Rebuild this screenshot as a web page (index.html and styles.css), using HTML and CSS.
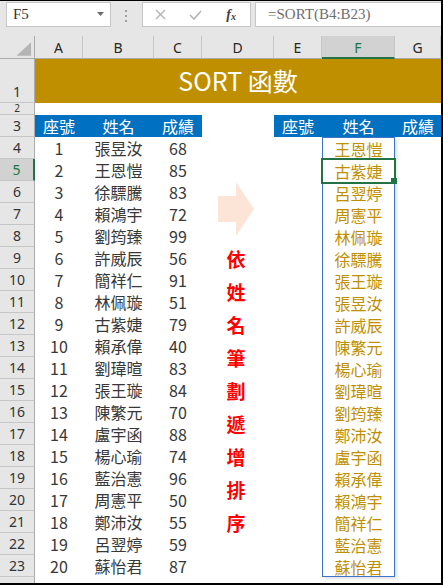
FILE: index.html
```html
<!DOCTYPE html>
<html lang="zh-Hant">
<head>
<meta charset="utf-8">
<title>SORT 函數</title>
<link rel="stylesheet" href="styles.css">
</head>
<body>
<div class="frame">
  <div class="fbar">
    <div class="namebox"><span>F5</span><svg class="drop" width="7" height="4" viewBox="0 0 7 4"><path d="M0 0H7L3.5 4Z" fill="#6b6b6b"/></svg></div>
    <svg class="dots" width="4" height="12" viewBox="0 0 4 12"><rect x="1" y="0" width="2" height="2" fill="#a0a0a0"/><rect x="1" y="5" width="2" height="2" fill="#a0a0a0"/><rect x="1" y="10" width="2" height="2" fill="#a0a0a0"/></svg>
    <div class="btns">
      <span class="btn"><svg width="11" height="11" viewBox="0 0 11 11"><path d="M1 1L10 10M10 1L1 10" stroke="#b3b3b3" stroke-width="1.4" fill="none"/></svg></span>
      <span class="btn"><svg width="13" height="10" viewBox="0 0 13 10"><path d="M1 5L5 9L12 1" stroke="#b3b3b3" stroke-width="1.6" fill="none"/></svg></span>
      <span class="btn fx">f<span class="x">x</span></span>
    </div>
    <div class="formula">=SORT(B4:B23)</div>
  </div>

  <div class="sheet">
    <div class="ch corner"><svg width="35" height="22" viewBox="0 0 35 22"><path d="M17 20H32V6Z" fill="#b4b4b4"/></svg></div>
    <div class="ch">A</div>
    <div class="ch">B</div>
    <div class="ch">C</div>
    <div class="ch">D</div>
    <div class="ch">E</div>
    <div class="ch csel">F</div>
    <div class="ch">G</div>

    <div class="dcol">
      <svg class="arrow" width="36" height="54" viewBox="0 0 36 54"><path d="M0 14H18V0L36 27L18 54V40H0Z" fill="#fce4d6"/></svg>
      <div class="vtext"><span>依</span><span>姓</span><span>名</span><span>筆</span><span>劃</span><span>遞</span><span>增</span><span>排</span><span>序</span></div>
    </div>

    <div class="spill">
      <div class="f">王恩愷</div>
      <div class="f sel">古紫婕</div>
      <div class="f">呂翌婷</div>
      <div class="f">周憲平</div>
      <div class="f">林佩璇</div>
      <div class="f">徐驃騰</div>
      <div class="f">張王璇</div>
      <div class="f">張昱汝</div>
      <div class="f">許威辰</div>
      <div class="f">陳繁元</div>
      <div class="f">楊心瑜</div>
      <div class="f">劉瑋暄</div>
      <div class="f">劉筠臻</div>
      <div class="f">鄭沛汝</div>
      <div class="f">盧宇函</div>
      <div class="f">賴承偉</div>
      <div class="f">賴鴻宇</div>
      <div class="f">簡祥仁</div>
      <div class="f">藍治憲</div>
      <div class="f">蘇怡君</div>
    </div>

    <div class="rh c1">1</div><div class="title">SORT 函數</div>
    <div class="rh c1 short">2</div>
    <div class="rh c1">3</div><div class="hd c2">座號</div><div class="hd c3">姓名</div><div class="hd c4">成績</div><div class="hd c6">座號</div><div class="hd c7">姓名</div><div class="hd c8">成績</div>

    <div class="rh c1">4</div><div class="d c2">1</div><div class="d c3">張昱汝</div><div class="d c4">68</div>
    <div class="rh c1 rsel">5</div><div class="d c2">2</div><div class="d c3">王恩愷</div><div class="d c4">85</div>
    <div class="rh c1">6</div><div class="d c2">3</div><div class="d c3">徐驃騰</div><div class="d c4">83</div>
    <div class="rh c1">7</div><div class="d c2">4</div><div class="d c3">賴鴻宇</div><div class="d c4">72</div>
    <div class="rh c1">8</div><div class="d c2">5</div><div class="d c3">劉筠臻</div><div class="d c4">99</div>
    <div class="rh c1">9</div><div class="d c2">6</div><div class="d c3">許威辰</div><div class="d c4">56</div>
    <div class="rh c1">10</div><div class="d c2">7</div><div class="d c3">簡祥仁</div><div class="d c4">91</div>
    <div class="rh c1">11</div><div class="d c2">8</div><div class="d c3">林佩璇</div><div class="d c4">51</div>
    <div class="rh c1">12</div><div class="d c2">9</div><div class="d c3">古紫婕</div><div class="d c4">79</div>
    <div class="rh c1">13</div><div class="d c2">10</div><div class="d c3">賴承偉</div><div class="d c4">40</div>
    <div class="rh c1">14</div><div class="d c2">11</div><div class="d c3">劉瑋暄</div><div class="d c4">83</div>
    <div class="rh c1">15</div><div class="d c2">12</div><div class="d c3">張王璇</div><div class="d c4">84</div>
    <div class="rh c1">16</div><div class="d c2">13</div><div class="d c3">陳繁元</div><div class="d c4">70</div>
    <div class="rh c1">17</div><div class="d c2">14</div><div class="d c3">盧宇函</div><div class="d c4">88</div>
    <div class="rh c1">18</div><div class="d c2">15</div><div class="d c3">楊心瑜</div><div class="d c4">74</div>
    <div class="rh c1">19</div><div class="d c2">16</div><div class="d c3">藍治憲</div><div class="d c4">96</div>
    <div class="rh c1">20</div><div class="d c2">17</div><div class="d c3">周憲平</div><div class="d c4">50</div>
    <div class="rh c1">21</div><div class="d c2">18</div><div class="d c3">鄭沛汝</div><div class="d c4">55</div>
    <div class="rh c1">22</div><div class="d c2">19</div><div class="d c3">呂翌婷</div><div class="d c4">59</div>
    <div class="rh c1">23</div><div class="d c2">20</div><div class="d c3">蘇怡君</div><div class="d c4">87</div>
    <div class="rh c1 last"></div>
  </div>
</div>
</body>
</html>
```

FILE: styles.css
```css
* { box-sizing: border-box; margin: 0; padding: 0; }
body { margin: 0; background: #fff; }

.frame {
  width: 443px;
  height: 585px;
  border-top: 1px solid #000;
  border-right: 2px solid #000;
  border-bottom: 2px solid #000;
  display: flex;
  flex-direction: column;
  background: #e6e6e6;
  overflow: hidden;
}

/* formula bar */
.fbar {
  height: 35px;
  flex: none;
  display: flex;
  align-items: flex-start;
  padding-top: 1px;
}
.namebox {
  margin-left: 6px;
  width: 105px;
  height: 25px;
  background: #fff;
  border: 1px solid #c6c6c6;
  display: flex;
  align-items: center;
  justify-content: space-between;
  padding: 0 6px;
  font: 15px "Liberation Serif", serif;
  color: #333;
}
.drop { margin-top: -2px; }
.dots { margin-left: 13px; margin-top: 8px; flex: none; }
.btns {
  margin-left: 14px;
  width: 109px;
  height: 25px;
  background: #fff;
  border: 1px solid #c6c6c6;
  display: flex;
  align-items: center;
}
.btn {
  width: 35px;
  height: 23px;
  display: flex;
  align-items: center;
  justify-content: center;
}
.fx {
  width: 38px;
  font: italic bold 14px "Liberation Serif", serif;
  color: #404040;
}
.fx .x { font-size: 10px; margin-top: 3px; }
.formula {
  margin-left: 4px;
  flex: 1;
  height: 25px;
  background: #fff;
  border: 1px solid #c6c6c6;
  border-right: 0;
  padding-left: 12px;
  display: flex;
  align-items: center;
  font: 15px "Liberation Serif", serif;
  color: #6e6e6e;
}

/* sheet grid */
.sheet {
  flex: 1;
  background: #fff;
  display: grid;
  grid-template-columns: 35px 48px 71px 48px 72px 48px 73px 46px;
  grid-template-rows: 23px 44px 12px 22px repeat(20, 22px) 1fr;
  font-family: "Noto Sans CJK TC", "Noto Sans", sans-serif;
}
.c1 { grid-column: 1; }
.c2 { grid-column: 2; }
.c3 { grid-column: 3; }
.c4 { grid-column: 4; }
.c6 { grid-column: 6; }
.c7 { grid-column: 7; }
.c8 { grid-column: 8; }

.ch {
  background: #e6e6e6;
  border-right: 1px solid #c6c6c6;
  border-bottom: 1px solid #ababab;
  display: flex;
  align-items: center;
  justify-content: center;
  font: 14px "Noto Sans", sans-serif;
  color: #262626;
  padding-top: 1px;
}
.ch.corner { border-right: 1px solid #ababab; padding: 0; align-items: flex-end; }
.ch.csel {
  background: #d2d2d2;
  border-bottom: 2px solid #217346;
  color: #217346;
  padding-top: 2px;
}

.rh {
  background: #e6e6e6;
  border-right: 1px solid #ababab;
  border-bottom: 1px solid #c6c6c6;
  display: flex;
  align-items: flex-end;
  justify-content: center;
  font: 14px/19px "Noto Sans", sans-serif;
  color: #333;
  overflow: hidden;
  padding-bottom: 1px;
}
.rh.short {
  font-size: 10px;
  line-height: 11px;
  padding-bottom: 0;
  overflow: visible;
}
.rh.rsel {
  background: #d2d2d2;
  border-right: 2px solid #217346;
  color: #217346;
}
.rh.last { border-bottom: 0; }

.title {
  grid-column: 2 / 9;
  background: #bf8f00;
  color: #fff;
  font-size: 25px;
  display: flex;
  align-items: center;
  justify-content: center;
  padding-bottom: 2px;
}

.hd {
  background: #0070c0;
  color: #fff;
  font-size: 16px;
  line-height: 22px;
  display: flex;
  align-items: center;
  justify-content: center;
}

.d {
  font-size: 16px;
  line-height: 22px;
  color: #383838;
  display: flex;
  align-items: center;
  justify-content: center;
}

/* column D: arrow + vertical caption */
.dcol {
  grid-column: 5;
  grid-row: 5 / 25;
  display: flex;
  flex-direction: column;
  align-items: center;
  padding-top: 45px;
  padding-right: 4px;
}
.vtext {
  margin-top: 6px;
  display: flex;
  flex-direction: column;
  align-items: center;
  color: #ff0000;
  font-weight: 700;
  font-size: 19px;
  line-height: 33px;
}

/* spill range F4:F23 */
.spill {
  grid-column: 7;
  grid-row: 5 / 25;
  border: 1px solid #3d73c9;
  box-shadow: 2px 2px 3px rgba(0, 0, 0, 0.12);
  display: grid;
  grid-template-rows: repeat(20, 1fr);
}
.f {
  color: #bf8f00;
  font-size: 16px;
  line-height: 22px;
  display: flex;
  align-items: center;
  justify-content: center;
}
.sel {
  position: relative;
  outline: 2px solid #217346;
}
.sel::after {
  content: "";
  position: absolute;
  right: -3px;
  bottom: -2px;
  width: 6px;
  height: 6px;
  background: #217346;
}
```
